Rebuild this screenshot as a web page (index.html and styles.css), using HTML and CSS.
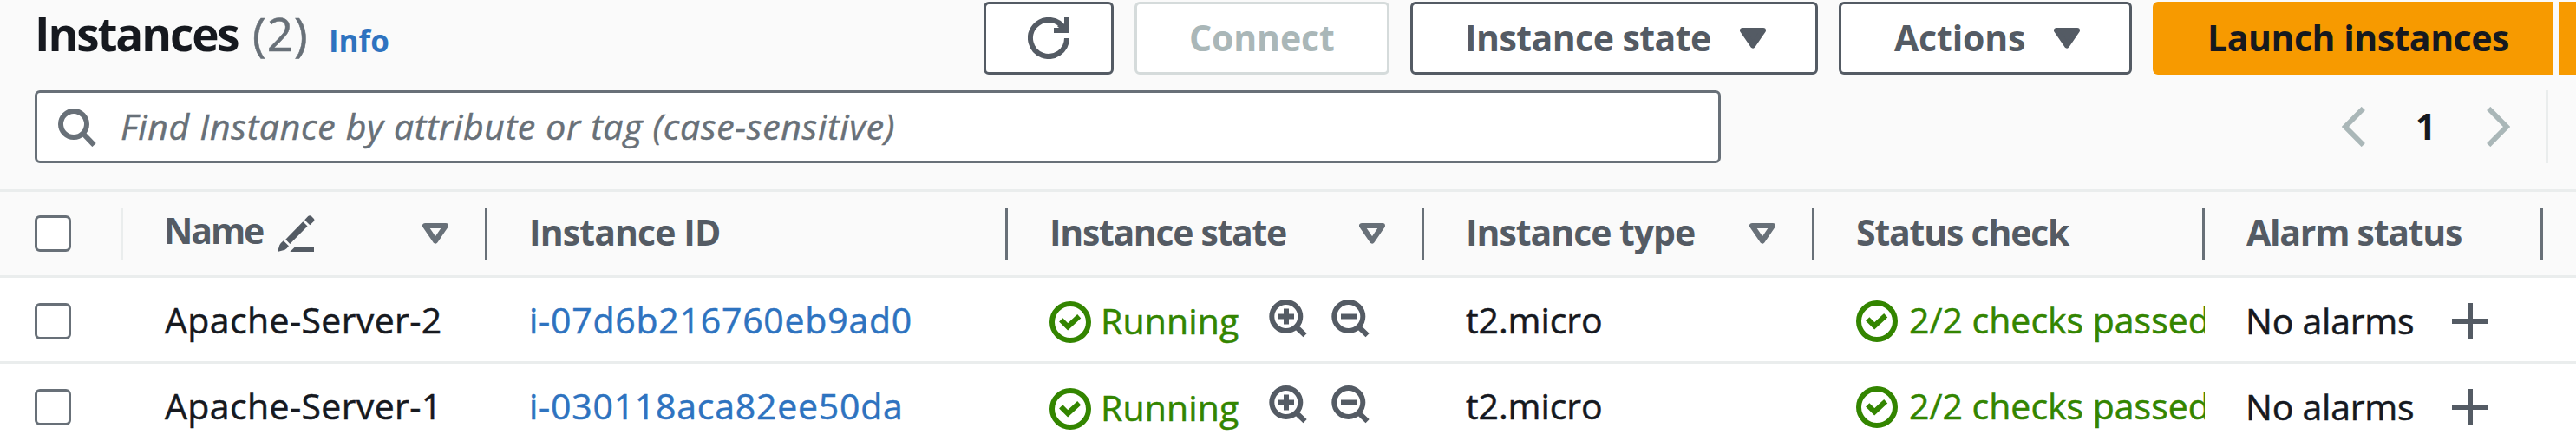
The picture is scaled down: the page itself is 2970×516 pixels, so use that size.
FILE: index.html
```html
<!DOCTYPE html>
<html lang="en">
<head>
<meta charset="utf-8">
<title>Instances</title>
<link rel="stylesheet" href="styles.css">
</head>
<body>
<svg class="defs" aria-hidden="true">
  <symbol id="check" viewBox="0 0 48 48"><circle cx="24" cy="24" r="21"/><path d="M13.2 21.3 21.2 29.3 34.2 17.2"/></symbol>
  <symbol id="zoom-in" viewBox="0 0 48 48"><circle cx="21.8" cy="21.5" r="16.5"/><path d="M33 33 43.6 43.2M13 21.5H31M22 12.5V30.5"/></symbol>
  <symbol id="zoom-out" viewBox="0 0 48 48"><circle cx="21.8" cy="21.5" r="16.5"/><path d="M33 33 43.6 43.2M13 21.5H31"/></symbol>
  <symbol id="caret" viewBox="0 0 30 24"><path d="M3 3H27L15 20.5Z" stroke-linejoin="round"/></symbol>
  <symbol id="plus" viewBox="0 0 42 42"><path d="M0 21H42M21 0V42"/></symbol>
</svg>
<header class="toolbar">
  <h1 class="title">Instances</h1>
  <span class="count">(2)</span>
  <a class="info">Info</a>
  <div class="actions">
    <button class="btn refresh"><svg width="48" height="48" viewBox="0 0 48 48"><path d="M45 24A21 21 0 1 1 42.5 14"/><path d="M45 0V15H30M36 8 44 15"/></svg></button>
    <button class="btn connect" disabled><span>Connect</span></button>
    <button class="btn state"><span>Instance state</span><svg class="solid" width="30" height="24"><use href="#caret"/></svg></button>
    <button class="btn menu"><span>Actions</span><svg class="solid" width="30" height="24"><use href="#caret"/></svg></button>
    <button class="btn launch"><span>Launch instances</span></button>
    <button class="btn more" aria-label="More"></button>
  </div>
</header>
<div class="filter">
  <div class="search">
    <svg width="44" height="44" viewBox="0 0 44 44"><circle cx="18" cy="18" r="15"/><path d="M28.5 28.5 41.5 42"/></svg>
    <span>Find Instance by attribute or tag (case-sensitive)</span>
  </div>
  <nav class="pager">
    <svg width="27" height="46" viewBox="0 0 27 46"><path d="M24.8 2 4 23 24.8 44"/></svg>
    <b>1</b>
    <svg width="27" height="46" viewBox="0 0 27 46"><path d="M2.2 2 23 23 2.2 44"/></svg>
  </nav>
</div>
<main class="table">
  <div class="row head">
    <div class="cell pick faint"><i class="box"></i></div>
    <div class="cell"><span class="h-name">Name</span><svg class="pencil" width="43" height="42" viewBox="0 0 43 42"><path d="M9.3 27.7 29.3 7.3 34.5 12.5 14.3 33ZM31.2 5.3 35.2 1Q37 -.6 39 1L41.5 3.5Q43.3 5.2 41.7 7L37.3 11.3ZM0 42 2.3 34.2Q3.5 31.8 6.8 29.2L12.9 35.3Q11 38.4 8.4 39.8ZM14.3 42 20.5 36H42V42Z"/></svg><svg class="sort" width="30" height="24"><use href="#caret"/></svg></div>
    <div class="cell"><span class="h-id">Instance ID</span></div>
    <div class="cell"><span class="h-state">Instance state</span><svg class="sort" width="30" height="24"><use href="#caret"/></svg></div>
    <div class="cell"><span class="h-type">Instance type</span><svg class="sort" width="30" height="24"><use href="#caret"/></svg></div>
    <div class="cell"><span class="h-check">Status check</span></div>
    <div class="cell"><span class="h-alarm">Alarm status</span></div>
  </div>
  <div class="row">
    <div class="cell pick"><i class="box"></i></div>
    <div class="cell"><span class="name">Apache-Server-2</span></div>
    <div class="cell"><a class="id">i-07d6b216760eb9ad0</a></div>
    <div class="cell running"><svg class="ok" width="48" height="48"><use href="#check"/></svg><span>Running</span><svg class="zoom" width="48" height="48"><use href="#zoom-in"/></svg><svg class="zoom" width="48" height="48"><use href="#zoom-out"/></svg></div>
    <div class="cell"><span class="type">t2.micro</span></div>
    <div class="cell passed"><svg class="ok" width="48" height="48"><use href="#check"/></svg><span>2/2 checks passed</span></div>
    <div class="cell alarm"><span>No alarms</span><svg width="42" height="42"><use href="#plus"/></svg></div>
  </div>
  <div class="row">
    <div class="cell pick"><i class="box"></i></div>
    <div class="cell"><span class="name">Apache-Server-1</span></div>
    <div class="cell"><a class="id">i-030118aca82ee50da</a></div>
    <div class="cell running"><svg class="ok" width="48" height="48"><use href="#check"/></svg><span>Running</span><svg class="zoom" width="48" height="48"><use href="#zoom-in"/></svg><svg class="zoom" width="48" height="48"><use href="#zoom-out"/></svg></div>
    <div class="cell"><span class="type">t2.micro</span></div>
    <div class="cell passed"><svg class="ok" width="48" height="48"><use href="#check"/></svg><span>2/2 checks passed</span></div>
    <div class="cell alarm"><span>No alarms</span><svg width="42" height="42"><use href="#plus"/></svg></div>
  </div>
</main>
</body>
</html>
```
FILE: styles.css
```css
* { box-sizing: border-box; }
body {
  margin: 0;
  width: 2970px;
  height: 516px;
  overflow: hidden;
  background: #fafafa;
  color: #16191f;
  font: 41px/56px "Open Sans", "Noto Sans", sans-serif;
  white-space: nowrap;
}
svg { flex: none; fill: none; stroke: currentColor; stroke-width: 6; }
.defs { display: none; }

.toolbar { display: flex; height: 104px; padding: 2px 0 0 40px; line-height: 72px; }
.title { margin: 0; width: 251px; padding-top: 1px; font-size: 53px; font-weight: 700; line-height: 72px; letter-spacing: -2.1px; }
.count { width: 88px; padding-top: 1px; font-size: 53px; letter-spacing: 1px; color: #687078; -webkit-text-stroke: .5px; }
.info { padding-top: 8px; font-size: 35px; line-height: 73px; font-weight: 700; color: #2e73c0; }
.actions { display: flex; flex: none; margin-left: auto; gap: 24px; }
.btn {
  display: flex;
  align-items: center;
  height: 84px;
  margin: 0;
  padding: 0 0 0 60px;
  border: 3px solid #545b64;
  border-radius: 6px;
  background: #fff;
  color: #545b64;
  font: 700 41px/56px "Open Sans", "Noto Sans", sans-serif;
}
.btn span { padding-bottom: 3px; }
.refresh { width: 150px; padding-left: 48px; }
.connect { width: 294px; border-color: #d5dbdb; color: #aab7b8; letter-spacing: -.12px; }
.state { width: 470px; padding-left: 60px; letter-spacing: -.55px; }
.menu { width: 338px; padding-left: 61px; letter-spacing: -.17px; }
.state svg, .menu svg { margin-left: auto; margin-right: 57px; }
.solid { fill: currentColor; }
.launch { width: 462px; border: 0; border-radius: 6px 0 0 6px; padding-left: 63px; background: #f79a00; color: #16191f; letter-spacing: -.48px; }
.more { width: 20px; padding: 0; border: 0; border-radius: 0; margin-left: -18px; background: #f79a00; }

.filter { display: flex; height: 114px; padding-left: 40px; }
.search {
  display: flex;
  align-items: center;
  width: 1944px;
  height: 84px;
  padding-left: 24px;
  gap: 28px;
  border: 3px solid #687078;
  border-radius: 6px;
  background: #fff;
  color: #687078;
  font-style: italic;
  letter-spacing: .67px;
  -webkit-text-stroke: .5px;
}
.search svg { margin-top: 2px; }
.search span { padding-bottom: 2px; }
.pager {
  display: flex;
  align-items: center;
  height: 84px;
  width: 238px;
  margin-left: 716px;
  border-right: 3px solid #eaeded;
  color: #aab7b8;
}
.pager b { width: 23px; margin: 0 59px 0 58px; padding-bottom: 3px; color: #16191f; }

.table { border-top: 3px solid #eaeded; }
.row {
  display: grid;
  grid-template-columns: 142px 420px 600px 480px 450px 450px 390px 38px;
  height: 99px;
  border-bottom: 3px solid #eaeded;
  background: #fff;
}
.row:not(.head) { -webkit-text-stroke: .5px; }
.row:last-child { border-bottom-color: #fff; }
.cell { display: flex; align-items: center; padding-left: 48px; overflow: hidden; }
.pick { padding-left: 40px; }
.box { width: 42px; height: 42px; margin-top: 4px; border: 3px solid #687078; border-radius: 6px; background: #fff; }
.head { background: #fafafa; color: #545b64; font-weight: 700; }
.head .box { margin-top: 0; }
.head .cell::after { content: ""; width: 3px; height: 60px; margin-left: auto; background: #687078; }
.head .faint::after { background: #eaeded; }
.head span { padding-bottom: 4px; }
.head .sort { margin-left: auto; margin-right: 42px; color: #687078; }
.head .cell:has(.sort)::after { margin-left: 0; }
.pencil { margin-left: 16px; fill: currentColor; stroke: none; }
.head .h-name { width: 115px; margin-left: -1px; padding-bottom: 9px; letter-spacing: -2.1px; }
.h-id { letter-spacing: -.89px; }
.h-state { letter-spacing: -1.32px; }
.h-type { letter-spacing: -1.04px; }
.h-check { letter-spacing: -1.2px; }
.h-alarm { letter-spacing: -1.25px; }

.name { letter-spacing: .38px; }
.id { letter-spacing: .76px; color: #2e73c0; }
.running, .passed { color: #338500; }
.running .ok { margin: 6px 11px 0 0; }
.running span { width: 192px; padding-top: 2px; letter-spacing: .13px; }
.zoom { margin: 0 24px 2px 0; color: #545b64; }
.row:last-child .running .ok { margin-top: 8px; }
.row:last-child .running span { padding-top: 4px; }
.type { letter-spacing: -.08px; }
.passed .ok { margin: 4px 13px 0 0; }
.alarm span { width: 238px; margin-left: -1px; padding-top: 2px; letter-spacing: -.23px; }
.alarm svg { margin-top: 4px; color: #545b64; }
```
